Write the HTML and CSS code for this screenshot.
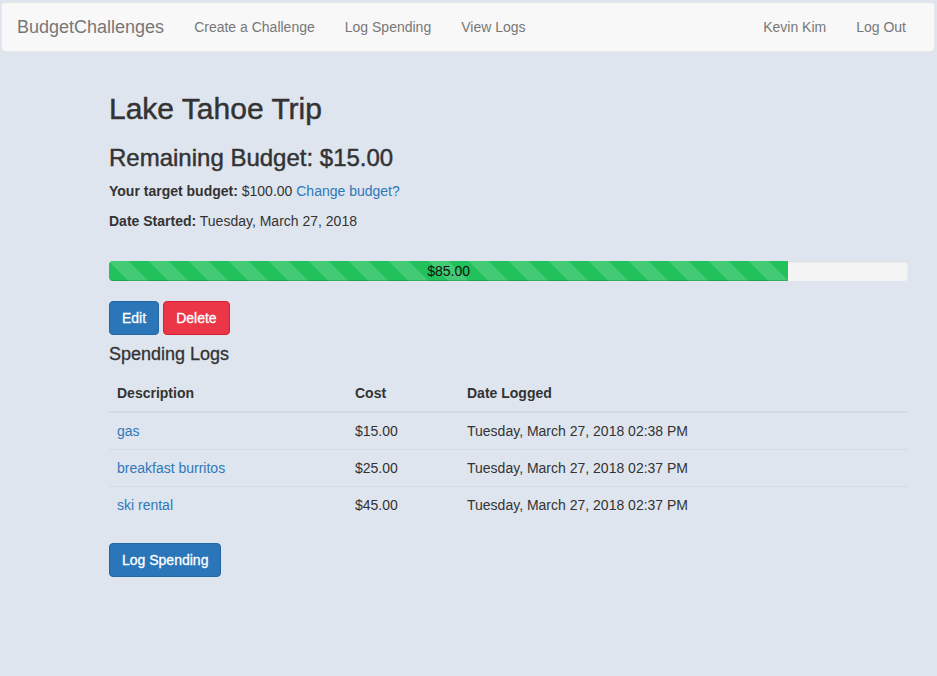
FILE: index.html
```html
<!DOCTYPE html>
<html lang="en">
<head>
<meta charset="utf-8">
<title>Lake Tahoe Trip - BudgetChallenges</title>
<link rel="stylesheet" href="styles.css">
</head>
<body>
<nav class="navbar">
  <a class="brand" href="#">BudgetChallenges</a>
  <ul class="nav">
    <li><a href="#">Create a Challenge</a></li>
    <li><a href="#">Log Spending</a></li>
    <li><a href="#">View Logs</a></li>
  </ul>
  <ul class="nav nav-right">
    <li><a href="#">Kevin Kim</a></li>
    <li><a href="#">Log Out</a></li>
  </ul>
</nav>

<main class="page">
  <h2 class="title">Lake Tahoe Trip</h2>
  <h3 class="remaining">Remaining Budget: $15.00</h3>
  <p><strong>Your target budget:</strong> $100.00 <a href="#">Change budget?</a></p>
  <p><strong>Date Started:</strong> Tuesday, March 27, 2018</p>

  <div class="progress">
    <div class="progress-bar" style="width: 85%">$85.00</div>
  </div>

  <div class="actions">
    <button class="btn btn-primary" type="button">Edit</button>
    <button class="btn btn-danger" type="button">Delete</button>
  </div>

  <h4 class="section-title">Spending Logs</h4>
  <table class="table">
    <thead>
      <tr>
        <th class="col-desc">Description</th>
        <th class="col-cost">Cost</th>
        <th class="col-date">Date Logged</th>
      </tr>
    </thead>
    <tbody>
      <tr>
        <td><a href="#">gas</a></td>
        <td>$15.00</td>
        <td>Tuesday, March 27, 2018 02:38 PM</td>
      </tr>
      <tr>
        <td><a href="#">breakfast burritos</a></td>
        <td>$25.00</td>
        <td>Tuesday, March 27, 2018 02:37 PM</td>
      </tr>
      <tr>
        <td><a href="#">ski rental</a></td>
        <td>$45.00</td>
        <td>Tuesday, March 27, 2018 02:37 PM</td>
      </tr>
    </tbody>
  </table>

  <button class="btn btn-primary" type="button">Log Spending</button>
</main>
</body>
</html>
```

FILE: styles.css
```css
* {
  box-sizing: border-box;
}

html, body {
  margin: 0;
  padding: 0;
}

body {
  background: #dee5ee;
  color: #333;
  font-family: "Liberation Sans", Arial, sans-serif;
  font-size: 14px;
  line-height: 20px;
  min-height: 676px;
}

a {
  color: #2f78b8;
  text-decoration: none;
}

/* Navbar */
.navbar {
  display: flex;
  align-items: center;
  height: 50px;
  margin: 2px 2px 20px 1px;
  padding: 0 13px 0 0;
  background: #f8f8f8;
  border: 1px solid #e7e7e7;
  border-radius: 4px;
}

.brand {
  padding: 0 15px;
  font-size: 18px;
  line-height: 20px;
  color: #777;
}

.nav {
  display: flex;
  list-style: none;
  margin: 0;
  padding: 0;
}

.nav a {
  display: block;
  padding: 15px;
  line-height: 20px;
  color: #777;
}

.nav-right {
  margin-left: auto;
}

/* Page */
.page {
  display: flow-root;
  padding: 0 29px 40px 109px;
}

.title,
.remaining,
.section-title {
  font-weight: 500;
  line-height: 1.1;
  color: #333;
  -webkit-text-stroke: 0.45px currentColor;
}

.title {
  margin: 20px 0 10px;
  font-size: 30px;
}

.remaining {
  margin: 20px 0 10px;
  font-size: 24px;
}

.section-title {
  margin: 10px 0 10px;
  font-size: 18px;
  -webkit-text-stroke: 0.3px currentColor;
}

p {
  margin: 0 0 10px;
}

strong {
  font-weight: bold;
}

/* Progress */
.progress {
  display: flex;
  height: 20px;
  margin: 30px 0 20px;
  background: #f4f4f4;
  border-radius: 4px;
  overflow: hidden;
  box-shadow: inset 0 1px 2px rgba(0, 0, 0, 0.1);
}

.progress-bar {
  height: 20px;
  background-color: #22c15c;
  background-image: linear-gradient(45deg,
    rgba(255, 255, 255, 0.15) 25%, transparent 25%,
    transparent 50%, rgba(255, 255, 255, 0.15) 50%,
    rgba(255, 255, 255, 0.15) 75%, transparent 75%, transparent);
  background-size: 40px 40px;
  box-shadow: inset 0 -1px 0 rgba(0, 0, 0, 0.15);
  color: #111;
  font-size: 14px;
  line-height: 20px;
  text-align: center;
}

/* Buttons */
.actions {
  display: flex;
  gap: 4px;
}

.btn {
  display: inline-block;
  padding: 6px 12px;
  font-family: inherit;
  font-size: 14px;
  line-height: 20px;
  color: #fff;
  border: 1px solid transparent;
  border-radius: 4px;
  cursor: pointer;
  -webkit-text-stroke: 0.3px currentColor;
}

.btn-primary {
  background: #2a76b9;
  border-color: #2567a3;
}

.btn-danger {
  background: #ea3647;
  border-color: #d9202f;
}

/* Table */
.table {
  width: 100%;
  border-collapse: collapse;
  border-spacing: 0;
  margin-bottom: 20px;
}

.table th,
.table td {
  padding: 8px;
  line-height: 20px;
  text-align: left;
  vertical-align: top;
}

.table th {
  font-weight: bold;
  border-bottom: 2px solid #d6dbe0;
}

.table td {
  border-top: 1px solid #d6dbe0;
}

.col-desc {
  width: 238px;
}

.col-cost {
  width: 112px;
}
```
